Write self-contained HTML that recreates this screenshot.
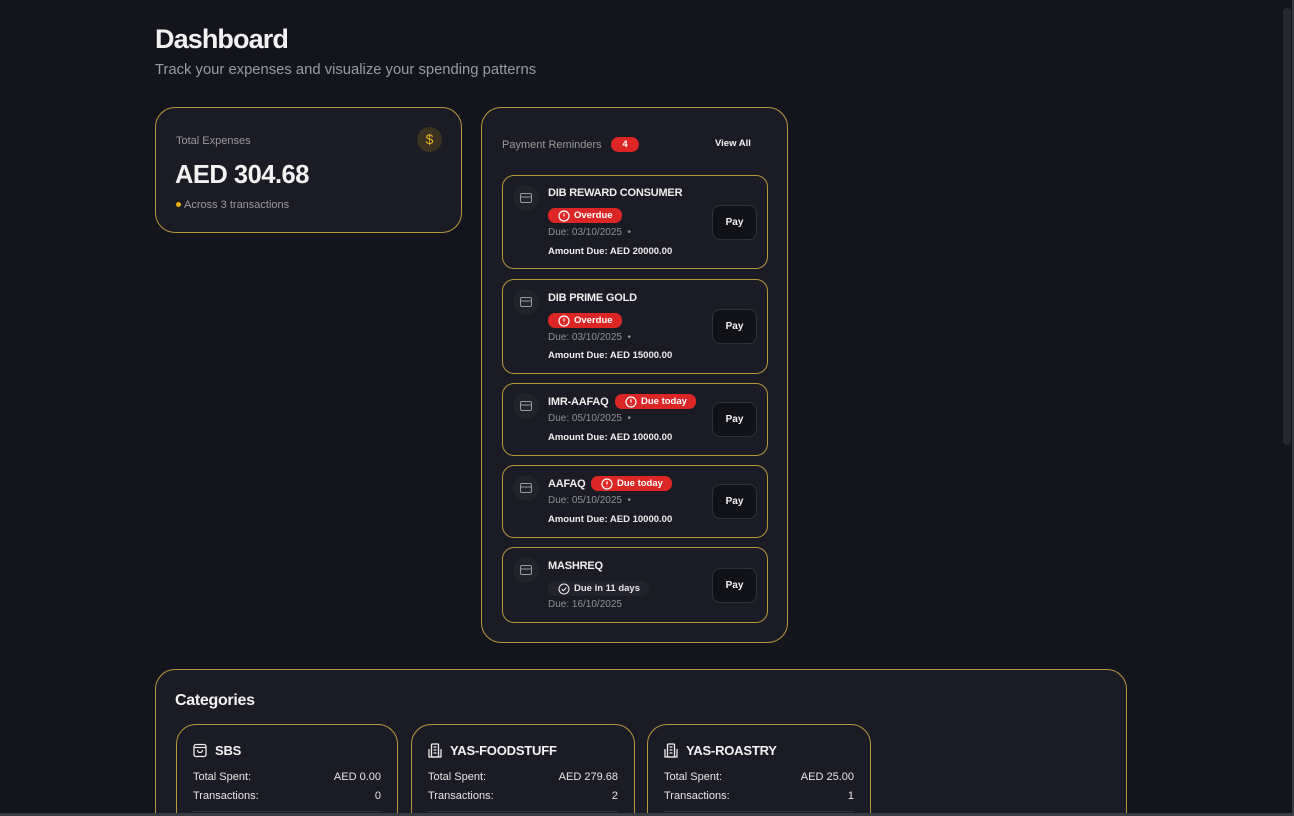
<!DOCTYPE html>
<html style="width:1294px;height:816px;overflow:hidden"><head><meta charset="utf-8"><style>
*{box-sizing:border-box;margin:0;padding:0}
body{width:1294px;height:816px;overflow:hidden;background:#13141c;font-family:"Liberation Sans",sans-serif;color:#f2f2f2;position:relative}
.abs{position:absolute}
.card{position:absolute;background:#1a1b24;border:1px solid #b8963a;border-radius:20px}
h1{position:absolute;left:155px;top:24px;font-size:27px;font-weight:700;letter-spacing:-0.9px}
.sub{position:absolute;left:155px;top:62px;font-size:14.8px;color:#9a9aa2}
.item{position:absolute;left:20px;width:266px;border:1px solid #b8963a;border-radius:12px;background:#1a1b24}
.ic{position:absolute;left:10px;top:9px;width:26px;height:26px;border-radius:50%;background:#22232c}
.ic svg{position:absolute;left:7px;top:8px}
.nm{position:absolute;left:45px;font-size:11px;font-weight:700;color:#eee;letter-spacing:-0.2px}
.badge{position:absolute;background:#dc2626;color:#fff;font-size:9.5px;font-weight:700;border-radius:7px;height:15px;line-height:15px;padding:0 9px 0 26px}
.badge svg{position:absolute;left:10px;top:1.5px}
.due{position:absolute;left:45px;font-size:10px;color:#8f8f96}
.amt{position:absolute;left:45px;font-size:9.5px;font-weight:700;color:#eee}
.pay{position:absolute;left:209px;width:45px;height:35px;border:1px solid #30313a;border-radius:8px;background:#111218;font-size:10px;font-weight:700;text-align:center;line-height:33px}
.cat{position:absolute;top:54px;width:222px;height:120px;border:1px solid #b8963a;border-radius:20px;background:#1a1b24}
.cat .t{position:absolute;left:38px;top:18px;font-size:13px;font-weight:700;letter-spacing:-0.2px}
.cat .r{position:absolute;left:16px;right:16px;font-size:11px;color:#e6e6e6}
.cat .r span{float:right}
.cat svg{position:absolute;left:16px;top:18px}
</style></head><body>
<h1>Dashboard</h1>
<div class="sub">Track your expenses and visualize your spending patterns</div>

<div class="card" style="left:155px;top:107px;width:307px;height:126px">
 <div class="abs" style="left:20px;top:27px;font-size:11px;color:#9a9a9a">Total Expenses</div>
 <div class="abs" style="left:261px;top:19px;width:25px;height:25px;border-radius:50%;background:#3a3322;color:#e3b325;font-size:14px;text-align:center;line-height:25px">$</div>
 <div class="abs" style="left:19px;top:53px;font-size:25.5px;font-weight:700;letter-spacing:-0.5px">AED 304.68</div>
 <div class="abs" style="left:20px;top:91px;font-size:11px;color:#9a9a9a"><span style="display:inline-block;width:5px;height:5px;border-radius:50%;background:#eab308;margin-right:3px;vertical-align:1px"></span>Across 3 transactions</div>
</div>

<div class="card" style="left:481px;top:107px;width:307px;height:536px">
 <div class="abs" style="left:20px;top:31px;font-size:11px;color:#9a9a9a">Payment Reminders</div>
 <div class="abs" style="left:129px;top:29px;width:28px;height:15px;border-radius:8px;background:#dc2626;color:#fff;font-size:9.5px;font-weight:700;text-align:center;line-height:15px">4</div>
 <div class="abs" style="left:233px;top:30px;font-size:9.5px;font-weight:700">View All</div>

 <div class="item" style="top:67px;height:94px">
  <div class="ic"><svg width="12" height="10" viewBox="0 0 12 10"><rect x="0.5" y="0.5" width="11" height="9" rx="1.5" fill="none" stroke="#9a9aa2"/><line x1="0.5" y1="4" x2="11.5" y2="4" stroke="#9a9aa2"/></svg></div>
  <div class="nm" style="top:11px">DIB REWARD CONSUMER</div>
  <div class="badge" style="left:45px;top:32px"><svg width="12" height="12" viewBox="0 0 12 12"><circle cx="6" cy="6" r="5" fill="none" stroke="#fff" stroke-width="1.2"/><path d="M6 3.2v3.3M6 8.2v.6" stroke="#fff" stroke-width="1.2"/></svg>Overdue</div>
  <div class="due" style="top:51px">Due: 03/10/2025 &nbsp;•</div>
  <div class="amt" style="top:70px">Amount Due: AED 20000.00</div>
  <div class="pay" style="top:29px">Pay</div>
 </div>
 <div class="item" style="top:171px;height:95px">
  <div class="ic"><svg width="12" height="10" viewBox="0 0 12 10"><rect x="0.5" y="0.5" width="11" height="9" rx="1.5" fill="none" stroke="#9a9aa2"/><line x1="0.5" y1="4" x2="11.5" y2="4" stroke="#9a9aa2"/></svg></div>
  <div class="nm" style="top:12px">DIB PRIME GOLD</div>
  <div class="badge" style="left:45px;top:33px"><svg width="12" height="12" viewBox="0 0 12 12"><circle cx="6" cy="6" r="5" fill="none" stroke="#fff" stroke-width="1.2"/><path d="M6 3.2v3.3M6 8.2v.6" stroke="#fff" stroke-width="1.2"/></svg>Overdue</div>
  <div class="due" style="top:52px">Due: 03/10/2025 &nbsp;•</div>
  <div class="amt" style="top:70px">Amount Due: AED 15000.00</div>
  <div class="pay" style="top:29px">Pay</div>
 </div>
 <div class="item" style="top:275px;height:73px">
  <div class="ic"><svg width="12" height="10" viewBox="0 0 12 10"><rect x="0.5" y="0.5" width="11" height="9" rx="1.5" fill="none" stroke="#9a9aa2"/><line x1="0.5" y1="4" x2="11.5" y2="4" stroke="#9a9aa2"/></svg></div>
  <div class="nm" style="top:12px">IMR-AAFAQ</div>
  <div class="badge" style="left:112px;top:10px"><svg width="12" height="12" viewBox="0 0 12 12"><circle cx="6" cy="6" r="5" fill="none" stroke="#fff" stroke-width="1.2"/><path d="M6 3.2v3.3M6 8.2v.6" stroke="#fff" stroke-width="1.2"/></svg>Due today</div>
  <div class="due" style="top:29px">Due: 05/10/2025 &nbsp;•</div>
  <div class="amt" style="top:48px">Amount Due: AED 10000.00</div>
  <div class="pay" style="top:18px">Pay</div>
 </div>
 <div class="item" style="top:357px;height:73px">
  <div class="ic"><svg width="12" height="10" viewBox="0 0 12 10"><rect x="0.5" y="0.5" width="11" height="9" rx="1.5" fill="none" stroke="#9a9aa2"/><line x1="0.5" y1="4" x2="11.5" y2="4" stroke="#9a9aa2"/></svg></div>
  <div class="nm" style="top:12px">AAFAQ</div>
  <div class="badge" style="left:88px;top:10px"><svg width="12" height="12" viewBox="0 0 12 12"><circle cx="6" cy="6" r="5" fill="none" stroke="#fff" stroke-width="1.2"/><path d="M6 3.2v3.3M6 8.2v.6" stroke="#fff" stroke-width="1.2"/></svg>Due today</div>
  <div class="due" style="top:29px">Due: 05/10/2025 &nbsp;•</div>
  <div class="amt" style="top:48px">Amount Due: AED 10000.00</div>
  <div class="pay" style="top:18px">Pay</div>
 </div>
 <div class="item" style="top:439px;height:76px">
  <div class="ic"><svg width="12" height="10" viewBox="0 0 12 10"><rect x="0.5" y="0.5" width="11" height="9" rx="1.5" fill="none" stroke="#9a9aa2"/><line x1="0.5" y1="4" x2="11.5" y2="4" stroke="#9a9aa2"/></svg></div>
  <div class="nm" style="top:12px">MASHREQ</div>
  <div class="badge" style="left:45px;top:33px;background:#22232c;color:#e6e6e6"><svg width="12" height="12" viewBox="0 0 12 12"><circle cx="6" cy="6" r="5" fill="none" stroke="#e6e6e6" stroke-width="1.1"/><path d="M3.8 6.2l1.6 1.5 3-3.2" fill="none" stroke="#e6e6e6" stroke-width="1.1"/></svg>Due in 11 days</div>
  <div class="due" style="top:51px">Due: 16/10/2025</div>
  <div class="pay" style="top:20px">Pay</div>
 </div>
</div>

<div class="card" style="left:155px;top:669px;width:972px;height:180px">
 <div class="abs" style="left:19px;top:22px;font-size:16px;font-weight:700;letter-spacing:-0.3px">Categories</div>
 <div class="cat" style="left:20px">
  <svg width="14" height="15" viewBox="0 0 14 15"><rect x="1" y="1.5" width="12" height="12" rx="2" fill="none" stroke="#eee" stroke-width="1.3"/><path d="M1 4.5h12M4.5 7a2.5 2.5 0 005 0" fill="none" stroke="#eee" stroke-width="1.3"/></svg>
  <div class="t">SBS</div>
  <div class="r" style="top:46px">Total Spent:<span>AED 0.00</span></div>
  <div class="r" style="top:65px">Transactions:<span>0</span></div>
  <div class="abs" style="left:16px;right:16px;top:86px;border-top:1px solid #30313a"></div>
 </div>
 <div class="cat" style="left:255px;width:224px">
  <svg width="14" height="15" viewBox="0 0 14 15"><rect x="3.5" y="1" width="7" height="13" rx="1" fill="none" stroke="#eee" stroke-width="1.3"/><path d="M1 6v8h12V6M5.5 4h3M5.5 7h3M5.5 10h3" fill="none" stroke="#eee" stroke-width="1.3"/></svg>
  <div class="t">YAS-FOODSTUFF</div>
  <div class="r" style="top:46px">Total Spent:<span>AED 279.68</span></div>
  <div class="r" style="top:65px">Transactions:<span>2</span></div>
  <div class="abs" style="left:16px;right:16px;top:86px;border-top:1px solid #30313a"></div>
 </div>
 <div class="cat" style="left:491px;width:224px">
  <svg width="14" height="15" viewBox="0 0 14 15"><rect x="3.5" y="1" width="7" height="13" rx="1" fill="none" stroke="#eee" stroke-width="1.3"/><path d="M1 6v8h12V6M5.5 4h3M5.5 7h3M5.5 10h3" fill="none" stroke="#eee" stroke-width="1.3"/></svg>
  <div class="t">YAS-ROASTRY</div>
  <div class="r" style="top:46px">Total Spent:<span>AED 25.00</span></div>
  <div class="r" style="top:65px">Transactions:<span>1</span></div>
  <div class="abs" style="left:16px;right:16px;top:86px;border-top:1px solid #30313a"></div>
 </div>
</div>

<div class="abs" style="left:1292px;top:0;width:2px;height:816px;background:#3a3b45"></div>
<div class="abs" style="left:1283px;top:8px;width:8px;height:437px;border-radius:4px;background:#262730"></div>
<div class="abs" style="left:0;top:813px;width:1294px;height:3px;background:#3a3b45"></div>
</body></html>
